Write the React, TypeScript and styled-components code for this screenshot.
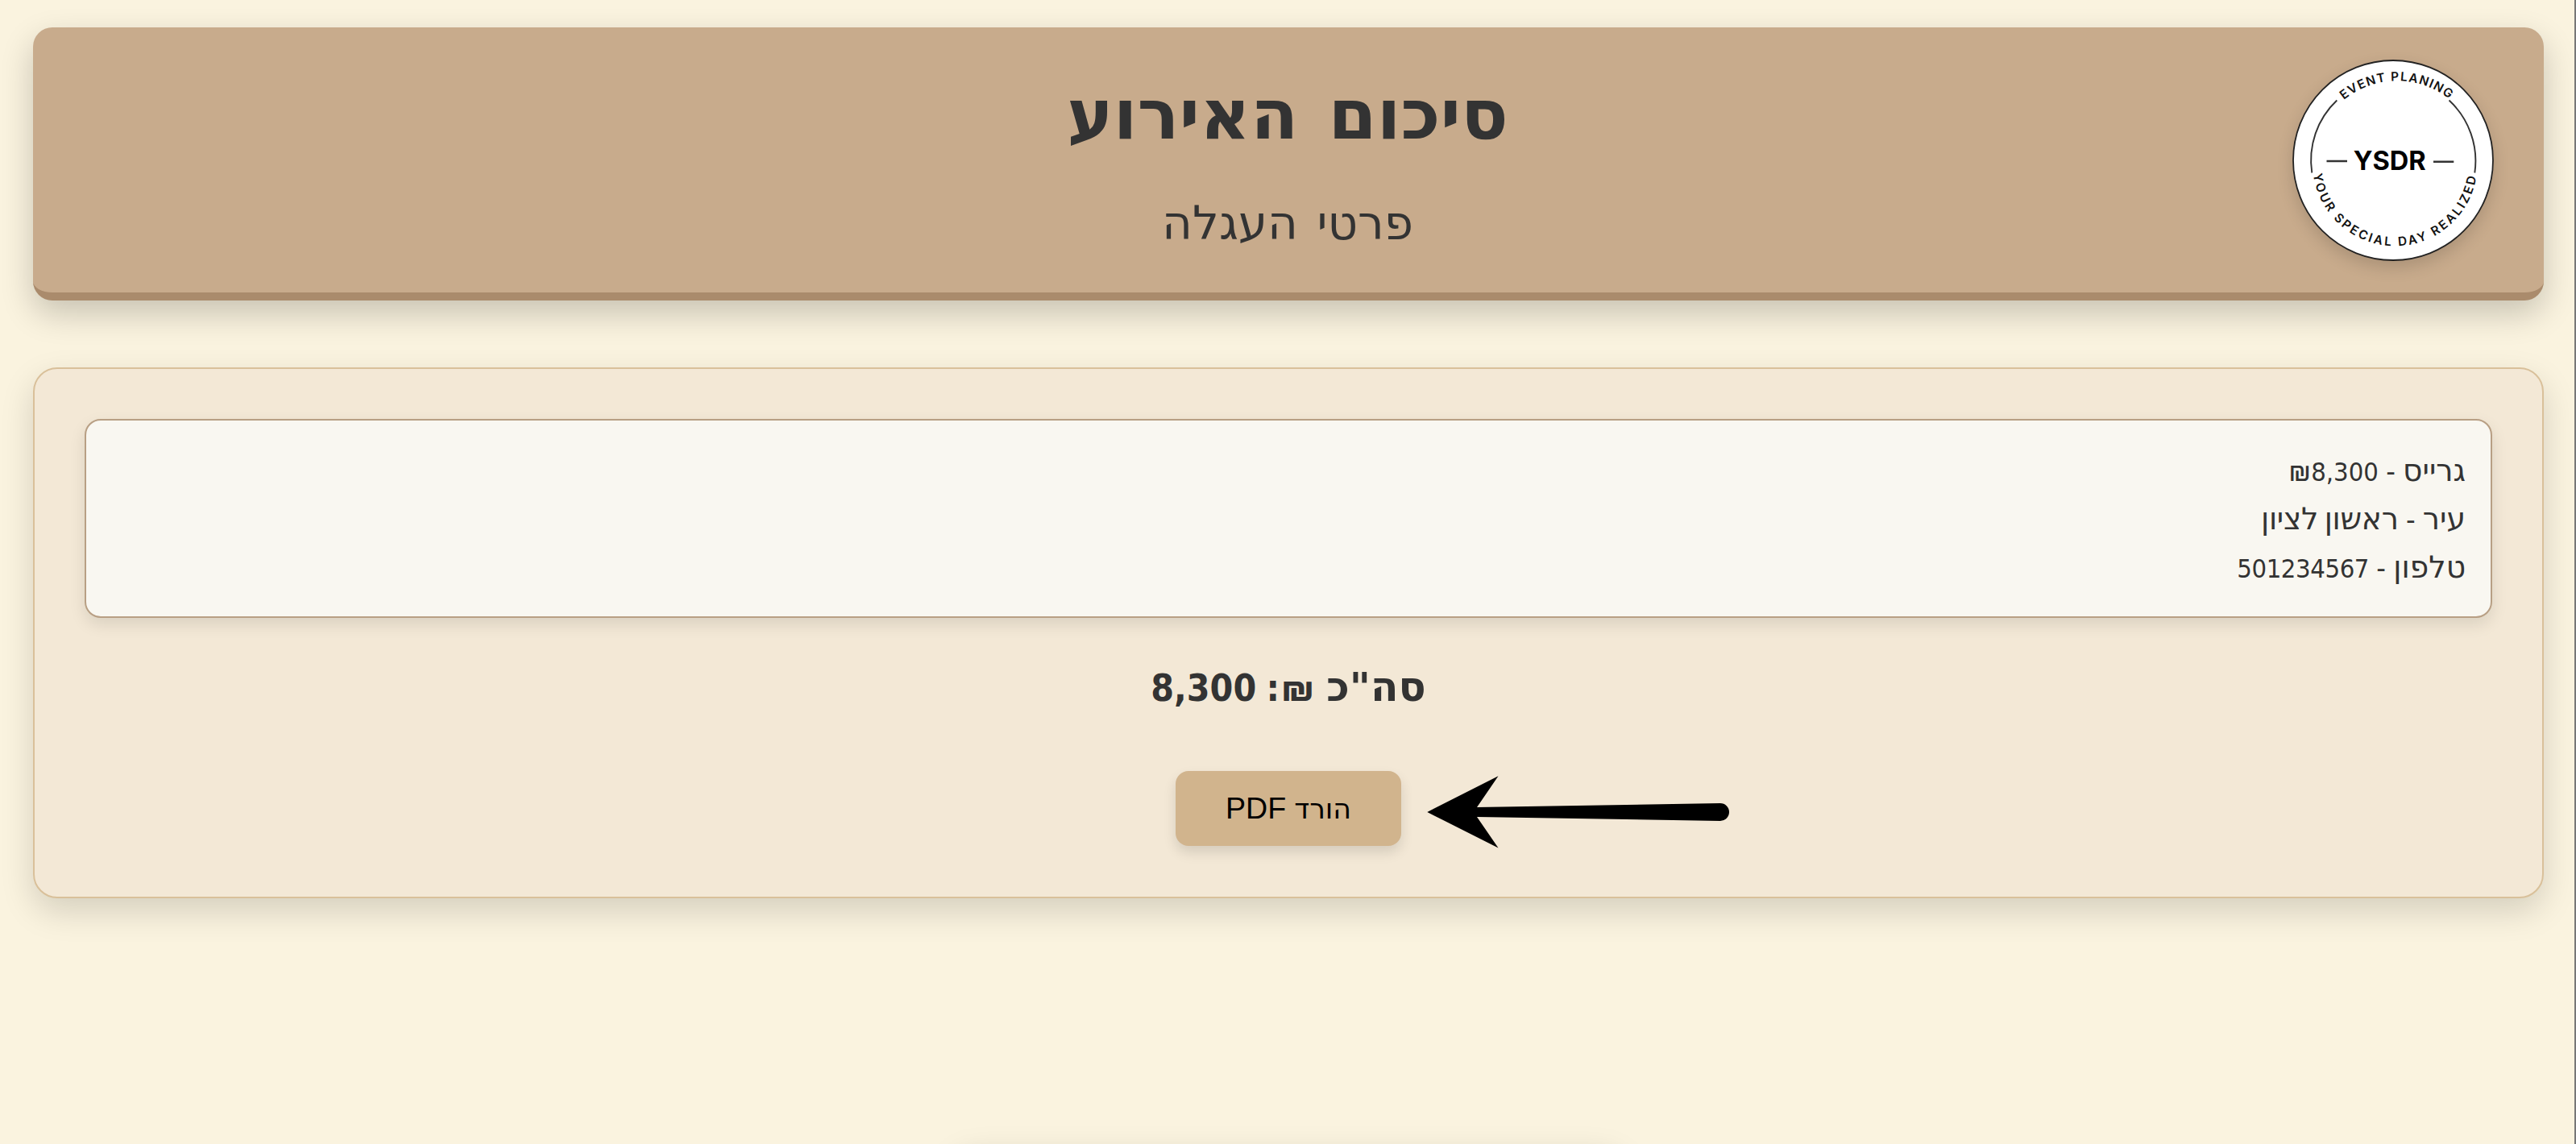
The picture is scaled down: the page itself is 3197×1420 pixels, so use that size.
import React from 'react';
import styled, { createGlobalStyle } from 'styled-components';

const hebrew = '"DejaVu Sans", sans-serif';
const digits = '"DejaVu Sans Condensed", "DejaVu Sans", sans-serif';

const GlobalStyle = createGlobalStyle`
  * { box-sizing: border-box; }
  body { margin: 0; background: #faf3df; }
`;

const Page = styled.main`
  height: 1420px;
  padding: 34px 38px 0 41px;
  border-right: 2px solid #777;
  overflow: hidden;
  background: #faf3df;
  color: #333;
  font-family: ${hebrew};
`;

const Header = styled.header`
  display: grid;
  grid-template-columns: 1fr auto 1fr;
  height: 339px;
  padding: 0 62px;
  border-bottom: 10px solid #aa8b6c;
  border-radius: 24px;
  background: #c8ab8c;
  box-shadow: 0 16px 40px rgba(0, 0, 0, 0.2);
`;

const Titles = styled.div`
  grid-column: 2;
  display: flex;
  flex-direction: column;
  align-items: center;
  padding: 48px 2px 0 0;
`;

const Title = styled.h1`
  margin: 0;
  font-size: 86.5px;
  line-height: 120px;
  font-weight: 700;
  word-spacing: 7px;
`;

const Subtitle = styled.h2`
  margin: 34px 0 0;
  font-size: 58px;
  line-height: 82px;
  font-weight: 400;
  word-spacing: 5px;
`;

const Logo = styled.div`
  grid-column: 3;
  justify-self: end;
  width: 250px;
  height: 250px;
  margin-top: 40px;
  border-radius: 50%;
  box-shadow: 0 8px 20px rgba(0, 0, 0, 0.15);
`;

const Card = styled.section`
  position: relative;
  display: flex;
  flex-direction: column;
  align-items: center;
  height: 659px;
  margin-top: 83px;
  padding: 62px;
  border: 2px solid #d9c09a;
  border-radius: 30px;
  background: #f3e8d6;
  box-shadow: 0 16px 40px rgba(0, 0, 0, 0.15);
`;

const List = styled.ul`
  align-self: stretch;
  height: 247px;
  margin: 0;
  padding: 32px 31px 0;
  list-style: none;
  border: 2px solid #b89f84;
  border-radius: 20px;
  background: #f9f7f1;
  box-shadow: 0 8px 20px rgba(0, 0, 0, 0.1);
`;

const Item = styled.li`
  height: 60px;
  font-size: 37.6px;
  line-height: 60px;
  white-space: pre;
`;

const Num = styled.span<{ $size: number }>`
  font-family: ${digits};
  font-size: ${(p) => p.$size}px;
  line-height: 1;
`;

const Dash = styled(Num)`
  word-spacing: -1px;
`;

const Phone = styled(Num)`
  letter-spacing: -0.4px;
`;

const Shekel = styled(Num)`
  font-family: Inter, sans-serif;
`;

const City = styled.span`
  letter-spacing: -0.3px;
  word-spacing: -4px;
`;

const Total = styled.p`
  margin: 51px 0 0;
  font-size: 50.3px;
  line-height: 70px;
  font-weight: 700;
  word-spacing: -2px;
  white-space: pre;

  ${Shekel} {
    margin-left: 2px;
  }
`;

const Download = styled.button`
  width: 280px;
  height: 93px;
  margin-top: 69px;
  padding: 0;
  border: 0;
  border-radius: 16px;
  background: #d1b48d;
  color: #000;
  font-family: ${hebrew};
  font-size: 34.8px;
  word-spacing: -1px;
  white-space: pre;
  box-shadow: 0 8px 16px rgba(0, 0, 0, 0.12);
`;

const Latin = styled.span`
  font-family: "Liberation Sans", Arial, sans-serif;
  font-size: 37.6px;
`;

const Arrow = styled.svg`
  position: absolute;
  left: 1728px;
  top: 504px;
`;

const Panel = styled.div`
  width: 830px;
  height: 200px;
  margin: 313px auto 0;
  border-radius: 24px;
  background: #fff;
  box-shadow: 0 8px 40px rgba(0, 0, 0, 0.15);
`;

function LogoMark() {
  return (
    <svg width="250" height="250" viewBox="2845 74 250 250" direction="ltr">
      <circle cx="2970" cy="199" r="124" fill="#fff" stroke="#222" strokeWidth="1.8" />
      <g fill="none" stroke="#333" strokeWidth="1.9">
        <path d="M2869.3 214.5A102.5 102.5 0 0 1 2900.3 124.5" />
        <path d="M3039.5 124.5A102.5 102.5 0 0 1 3071.3 214.5" />
        <path d="M2887.5 200H2913M3020 200.8H3045.3" strokeWidth="2.4" />
      </g>
      <defs>
        <path id="upper" d="M2909 124A104 104 0 0 1 3041 124" />
        <path id="lower" d="M2871 216A102.3 102.3 0 0 0 3073.5 219" />
      </defs>
      <g fontFamily="Inter, sans-serif" fill="#111">
        <text fontSize="15.4" fontWeight="600">
          <textPath href="#upper" textLength="141">EVENT PLANING</textPath>
        </text>
        <text fontSize="15.4" fontWeight="600">
          <textPath href="#lower" textLength="291">YOUR SPECIAL DAY REALIZED</textPath>
        </text>
        <text x="2965.7" y="211" fontSize="32.6" fontWeight="700" fill="#000" textAnchor="middle">YSDR</text>
      </g>
    </svg>
  );
}

export default function App() {
  return (
    <Page>
      <GlobalStyle />
      <Header>
        <Titles dir="rtl">
          <Title>סיכום האירוע</Title>
          <Subtitle>פרטי העגלה</Subtitle>
        </Titles>
        <Logo><LogoMark /></Logo>
      </Header>
      <Card>
        <List dir="rtl">
          <Item>גרייס<Dash $size={36}> - </Dash><Shekel $size={34}>₪</Shekel><Num $size={32.5}>8,300</Num></Item>
          <Item>עיר<Dash $size={36}> - </Dash><City>ראשון לציון</City></Item>
          <Item>טלפון<Dash $size={36}> - </Dash><Phone $size={32.5}>501234567</Phone></Item>
        </List>
        <Total dir="rtl">סה"כ <Shekel $size={44}>₪</Shekel><Num $size={46}>: 8,300</Num></Total>
        <Download dir="rtl">הורד <Latin>PDF</Latin></Download>
        <Arrow width="378" height="92" viewBox="1771 962 378 92">
          <path d="M1771.3 1008L1859.5 963.3L1833 1002L2135 997A11 11 0 0 1 2135 1019L1833 1014L1859.5 1052.6Z" />
        </Arrow>
      </Card>
      <Panel />
    </Page>
  );
}
